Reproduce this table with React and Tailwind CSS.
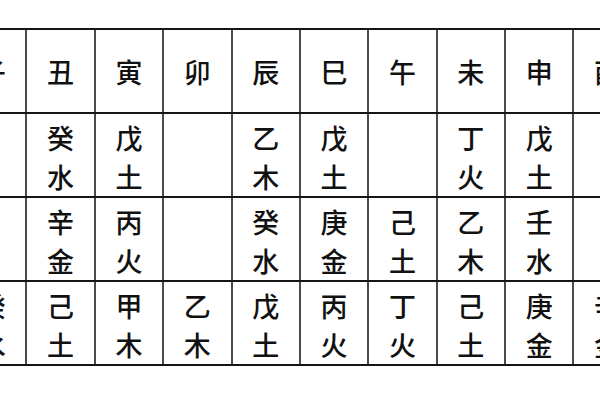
const branches = ['子', '丑', '寅', '卯', '辰', '巳', '午', '未', '申', '酉'];

const rows = [
    ['', '癸水', '戊土', '', '乙木', '戊土', '', '丁火', '戊土', ''],
    ['', '辛金', '丙火', '', '癸水', '庚金', '己土', '乙木', '壬水', ''],
    ['癸水', '己土', '甲木', '乙木', '戊土', '丙火', '丁火', '己土', '庚金', '辛金'],
];

const font = { fontFamily: '"Noto Sans CJK SC", "Noto Sans CJK TC", sans-serif' };

const Cell = ({ children }) => (
    <div className="w-[68.375px] shrink-0 h-full border-r-2 border-[#4a4a4a] flex flex-col items-center justify-center pt-1">
        {children}
    </div>
);

const App = () => {
    return (
        <div className="w-[600px] h-[400px] bg-white overflow-hidden text-[#111]" style={font}>
            <div className="pt-[28px] -ml-[41px] w-[700px]">
                <div className="border-t-2 border-[#151515]">
                    {/* header row */}
                    <div className="flex h-[84px] border-b-2 border-[#151515]">
                        {branches.map((b) => (
                            <Cell key={b}>
                                <span className="text-[27px] font-medium leading-none -mt-1">{b}</span>
                            </Cell>
                        ))}
                    </div>
                    {rows.map((row, i) => (
                        <div key={i} className="flex h-[84px] border-b-2 border-[#151515]">
                            {row.map((txt, j) => (
                                <Cell key={j}>
                                    {txt && (
                                        <div className="flex flex-col items-center text-[27px] font-medium leading-[39px]">
                                            <span>{txt[0]}</span>
                                            <span>{txt[1]}</span>
                                        </div>
                                    )}
                                </Cell>
                            ))}
                        </div>
                    ))}
                </div>
            </div>
        </div>
    );
};

export default App;
